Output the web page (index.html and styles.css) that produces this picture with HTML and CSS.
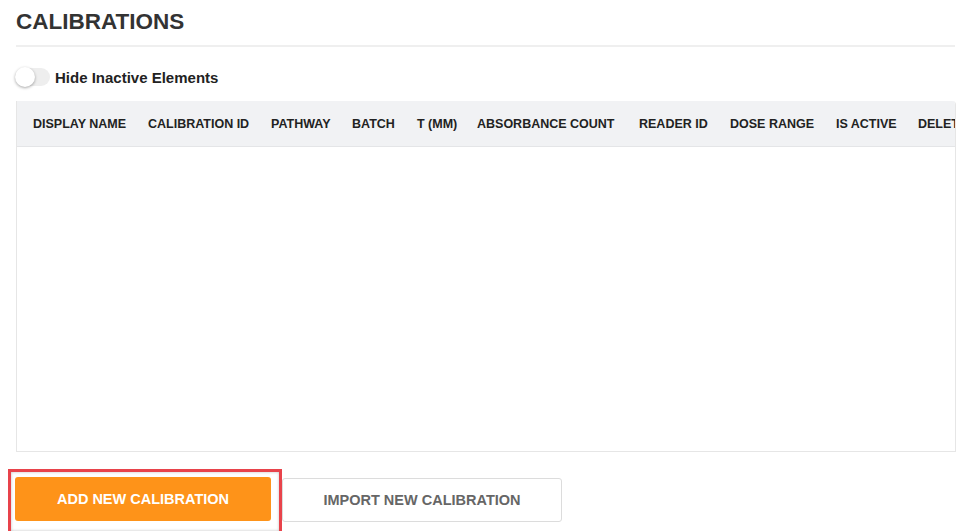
FILE: index.html
```html
<!DOCTYPE html>
<html lang="en">
<head>
  <meta charset="UTF-8" />
  <meta name="viewport" content="width=device-width, initial-scale=1.0"/>
  <title>Calibrations</title>
  <link rel="stylesheet" href="styles.css">
</head>
<body>
  <div class="page">
    <h1 class="title">CALIBRATIONS</h1>

    <label class="toggle-row">
      <span class="switch"><span class="knob"></span></span>
      <span class="toggle-label">Hide Inactive Elements</span>
    </label>

    <div class="table-wrap">
      <div class="table-head">
        <div class="th">DISPLAY NAME</div>
        <div class="th">CALIBRATION ID</div>
        <div class="th">PATHWAY</div>
        <div class="th">BATCH</div>
        <div class="th">T (MM)</div>
        <div class="th">ABSORBANCE COUNT</div>
        <div class="th">READER ID</div>
        <div class="th">DOSE RANGE</div>
        <div class="th">IS ACTIVE</div>
        <div class="th">DELETE</div>
      </div>
      <div class="table-body"></div>
    </div>

    <div class="actions">
      <div class="highlight">
        <button class="btn btn-primary">ADD NEW CALIBRATION</button>
      </div>
      <button class="btn btn-secondary">IMPORT NEW CALIBRATION</button>
    </div>
  </div>
</body>
</html>
```

FILE: styles.css
```css
body {
  margin: 0;
  font-family: 'Liberation Sans', Arial, sans-serif;
  background: #fff;
  color: #333;
}

.page {
  padding: 9px 0 0 16px;
  width: 940px;
}

.title {
  margin: 0;
  font-size: 22.5px;
  line-height: 26px;
  font-weight: bold;
  color: #333;
  padding-bottom: 10px;
  border-bottom: 2px solid #efefef;
  width: 939px;
}

/* toggle */
.toggle-row {
  display: flex;
  align-items: center;
  margin-top: 20px;
  height: 20px;
  cursor: pointer;
}

.switch {
  position: relative;
  width: 35px;
  height: 18px;
  margin-left: -1px;
  border-radius: 10px;
  background: #eeeeee;
}

.knob {
  position: absolute;
  left: 0;
  top: -1px;
  width: 20px;
  height: 20px;
  border-radius: 50%;
  background: #fff;
  box-shadow: 0 1px 3px rgba(0, 0, 0, 0.35);
}

.toggle-label {
  margin-left: 5px;
  font-size: 15px;
  font-weight: bold;
  color: #222;
}

/* table */
.table-wrap {
  margin-top: 14px;
  height: 350px;
  border: 1px solid #e6e6e6;
  border-top: none;
  border-radius: 0 4px 0 0;
  overflow: hidden;
}

.table-head {
  display: grid;
  grid-template-columns: 121px 123px 81px 65px 60px 162px 91px 106px 82px 60px;
  align-items: center;
  height: 45px;
  background: #f1f2f4;
  border-bottom: 1px solid #e4e5e7;
}

.th {
  padding-left: 10px;
  font-size: 12.5px;
  font-weight: bold;
  color: #222;
  white-space: nowrap;
}

.th:first-child {
  padding-left: 16px;
}

.table-body {
  height: 305px;
}

/* buttons */
.actions {
  display: flex;
  align-items: flex-start;
  margin-top: 17px;
  margin-left: -8px;
}

.highlight {
  border: 3px solid #e8434b;
  padding: 5px 8px 10px 4px;
  box-shadow: inset 0 0 3px rgba(0, 0, 0, 0.25);
}

.btn {
  font-family: 'Liberation Sans', Arial, sans-serif;
  font-size: 14.5px;
  font-weight: bold;
  height: 44px;
  border-radius: 3px;
  cursor: pointer;
}

.btn-primary {
  display: block;
  width: 256px;
  border: none;
  background: #fe9319;
  color: #fff;
}

.btn-secondary {
  margin-top: 9px;
  width: 280px;
  background: #fff;
  border: 1px solid #dcdcdc;
  color: #666;
}
```
